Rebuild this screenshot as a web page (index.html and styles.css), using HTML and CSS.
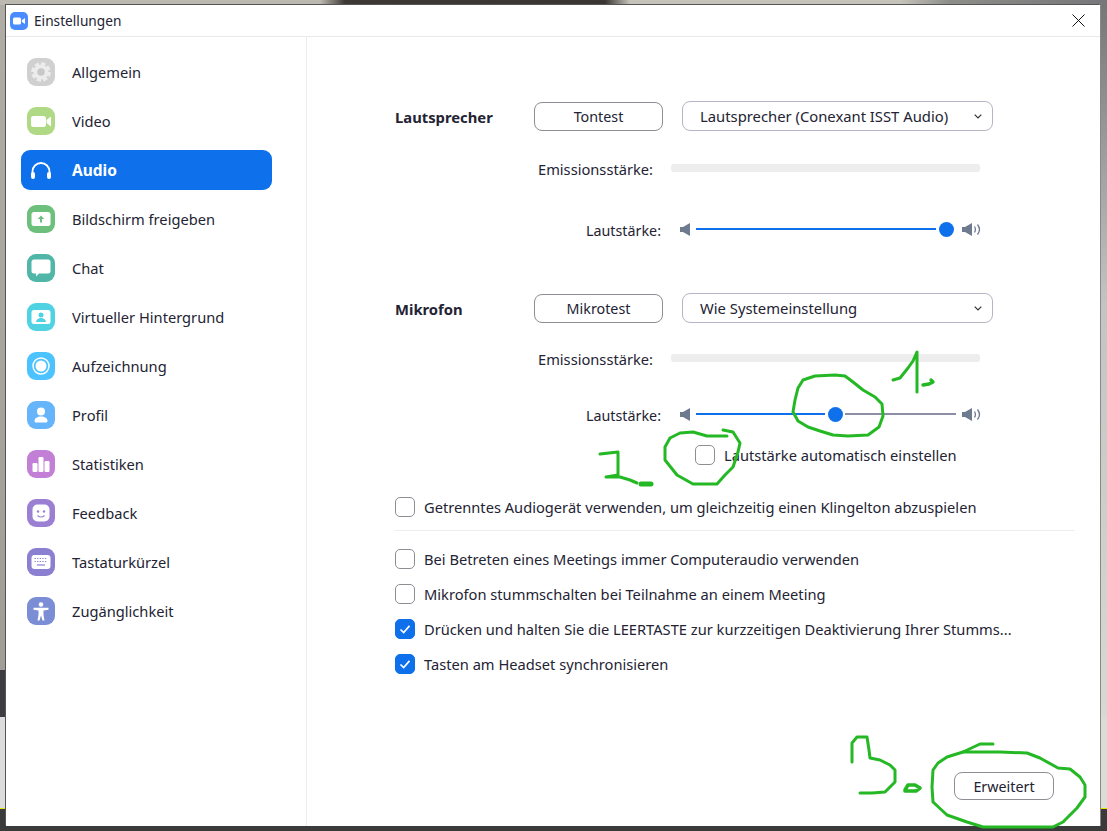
FILE: index.html
```html
<!DOCTYPE html>
<html lang="de">
<head>
<meta charset="utf-8">
<title>Einstellungen</title>
<link rel="stylesheet" href="styles.css">
</head>
<body>
<div class="window">
  <header class="titlebar">
    <svg class="app-logo" viewBox="0 0 18 18"><rect width="18" height="18" rx="5" fill="#4a8cff"/><rect x="3" y="5.500" width="8" height="7" rx="1.500" fill="#fff"/><path d="M11.800 8.200 15 6v6l-3.200-2.200z" fill="#fff"/></svg>
    <span class="title">Einstellungen</span>
    <svg class="close" viewBox="0 0 13 13"><path d="M.5.5l12 12M12.500.5l-12 12" stroke="#111" stroke-width="1" fill="none"/></svg>
  </header>
  <div class="main">
    <nav class="sidebar">
      <a class="nav-item"><span class="icon c-general"><svg viewBox="0 0 28 28"><circle cx="14" cy="14" r="7.500" fill="#ececec"/><circle cx="14" cy="14" r="8.300" fill="none" stroke="#ececec" stroke-width="3" stroke-dasharray="4.300 2.200"/><circle cx="14" cy="14" r="3.800" fill="#c8c8c8"/></svg></span><span>Allgemein</span></a>
      <a class="nav-item"><span class="icon c-video"><svg viewBox="0 0 28 28"><rect x="4" y="9" width="15" height="11" rx="2.500" fill="#fff"/><path d="M19.500 13 24 9.500v10L19.500 16z" fill="#fff"/></svg></span><span>Video</span></a>
      <a class="nav-item active"><span class="icon"><svg viewBox="0 0 28 28"><path d="M5.500 20v-4.500a8.500 8.500 0 0 1 17 0V20" fill="none" stroke="#fff" stroke-width="1.800"/><rect x="4" y="16" width="4" height="7" rx="2" fill="#fff"/><rect x="20" y="16" width="4" height="7" rx="2" fill="#fff"/></svg></span><span>Audio</span></a>
      <a class="nav-item"><span class="icon c-share"><svg viewBox="0 0 28 28"><rect x="4.500" y="7" width="19" height="14" rx="2.500" fill="#fff"/><path d="M14 10.500l3.200 3.500H15v3.500h-2V14h-2.200z" fill="#6cc07c"/></svg></span><span>Bildschirm freigeben</span></a>
      <a class="nav-item"><span class="icon c-chat"><svg viewBox="0 0 28 28"><path d="M7 5.500h14a2.500 2.500 0 0 1 2.500 2.500v9a2.500 2.500 0 0 1-2.500 2.500H12L9 22.500v-3H7A2.500 2.500 0 0 1 4.500 17V8A2.500 2.500 0 0 1 7 5.500z" fill="#fff"/></svg></span><span>Chat</span></a>
      <a class="nav-item"><span class="icon c-virtual"><svg viewBox="0 0 28 28"><rect x="4.500" y="7" width="19" height="14" rx="2.500" fill="#fff"/><circle cx="14" cy="12" r="2.500" fill="#4fd3e3"/><path d="M9 19c.5-3 2.500-4 5-4s4.500 1 5 4z" fill="#4fd3e3"/></svg></span><span>Virtueller Hintergrund</span></a>
      <a class="nav-item"><span class="icon c-record"><svg viewBox="0 0 28 28"><circle cx="14" cy="14" r="8" fill="none" stroke="#fff" stroke-width="1.500"/><circle cx="14" cy="14" r="5.500" fill="#fff"/></svg></span><span>Aufzeichnung</span></a>
      <a class="nav-item"><span class="icon c-profile"><svg viewBox="0 0 28 28"><circle cx="14" cy="10.500" r="4" fill="#fff"/><path d="M7.500 20c0-3 3-4.500 6.500-4.500s6.500 1.500 6.500 4.500c0 1-1 1.500-2 1.500H9.500c-1 0-2-.5-2-1.500z" fill="#fff"/></svg></span><span>Profil</span></a>
      <a class="nav-item"><span class="icon c-stats"><svg viewBox="0 0 28 28"><rect x="5.500" y="13" width="5" height="9" rx="1.200" fill="#fff"/><rect x="11.500" y="7" width="5" height="15" rx="1.200" fill="#fff"/><rect x="17.500" y="11" width="5" height="11" rx="1.200" fill="#fff"/></svg></span><span>Statistiken</span></a>
      <a class="nav-item"><span class="icon c-feedback"><svg viewBox="0 0 28 28"><rect x="5.500" y="5.500" width="17" height="17" rx="5" fill="#fff"/><circle cx="11" cy="12.500" r="1.200" fill="#9a7fd3"/><circle cx="17" cy="12.500" r="1.200" fill="#9a7fd3"/><path d="M10.500 16.500c2 2 5 2 7 0" fill="none" stroke="#9a7fd3" stroke-width="1.200"/></svg></span><span>Feedback</span></a>
      <a class="nav-item"><span class="icon c-keys"><svg viewBox="0 0 28 28"><rect x="4.500" y="7" width="19" height="14" rx="3" fill="#fff"/><path d="M7.500 10.500h13M7.500 13.500h13" stroke="#8a7fd0" stroke-width="1.200" stroke-dasharray="1.300 1.300"/><path d="M10 17h8" stroke="#8a7fd0" stroke-width="1.200"/></svg></span><span>Tastaturkürzel</span></a>
      <a class="nav-item"><span class="icon c-access"><svg viewBox="0 0 28 28"><circle cx="14" cy="7.500" r="2.300" fill="#fff"/><path d="M6.500 10.800h15v1.900l-5 .8V18l1 5.500h-2L14.200 19h-.4l-1.300 4.500h-2l1-5.500v-4.500l-5-.8z" fill="#fff"/></svg></span><span>Zugänglichkeit</span></a>
    </nav>
    <section class="content">
      <div class="row">
        <strong class="lead">Lautsprecher</strong>
        <button class="btn btn-test">Tontest</button>
        <div class="select"><span>Lautsprecher (Conexant ISST Audio)</span><svg class="chev" viewBox="0 0 8 5"><path d="M.7.7 4 4 7.300.7" fill="none" stroke="#333" stroke-width="1.200"/></svg></div>
      </div>
      <div class="row meter-row mt-28"><span class="meter-label">Emissionsstärke:</span><div class="meter"></div></div>
      <div class="row vol-row mt-40">
        <span class="vol-label">Lautstärke:</span>
        <svg class="spk-low" viewBox="0 0 10 13"><path d="M0 4h3l7-4v13L3 9H0z" fill="#6e7a8e"/></svg>
        <div class="slider"><i class="fill" style="width:240px"></i><i class="thumb"></i><i class="rest"></i></div>
        <svg class="spk-high" viewBox="0 0 19 13"><path d="M0 4h3l7-4v13L3 9H0z" fill="#6e7a8e"/><path d="M12.500 3.500c1.200 2 1.200 4 0 6M15.500 1.500c2.400 3 2.400 7 0 10" fill="none" stroke="#6e7a8e" stroke-width="1.300"/></svg>
      </div>
      <div class="row mt-54">
        <strong class="lead">Mikrofon</strong>
        <button class="btn btn-test">Mikrotest</button>
        <div class="select"><span>Wie Systemeinstellung</span><svg class="chev" viewBox="0 0 8 5"><path d="M.7.7 4 4 7.300.7" fill="none" stroke="#333" stroke-width="1.200"/></svg></div>
      </div>
      <div class="row meter-row mt-26"><span class="meter-label">Emissionsstärke:</span><div class="meter"></div></div>
      <div class="row vol-row mt-35">
        <span class="vol-label">Lautstärke:</span>
        <svg class="spk-low" viewBox="0 0 10 13"><path d="M0 4h3l7-4v13L3 9H0z" fill="#6e7a8e"/></svg>
        <div class="slider"><i class="fill" style="width:129px"></i><i class="thumb"></i><i class="rest"></i></div>
        <svg class="spk-high" viewBox="0 0 19 13"><path d="M0 4h3l7-4v13L3 9H0z" fill="#6e7a8e"/><path d="M12.500 3.500c1.200 2 1.200 4 0 6M15.500 1.500c2.400 3 2.400 7 0 10" fill="none" stroke="#6e7a8e" stroke-width="1.300"/></svg>
      </div>
      <label class="check indent mt-21"><span class="box"></span><span>Lautstärke automatisch einstellen</span></label>
      <label class="check mt-32"><span class="box"></span><span>Getrenntes Audiogerät verwenden, um gleichzeitig einen Klingelton abzuspielen</span></label>
      <hr class="divider">
      <div class="checks">
        <label class="check"><span class="box"></span><span>Bei Betreten eines Meetings immer Computeraudio verwenden</span></label>
        <label class="check"><span class="box"></span><span>Mikrofon stummschalten bei Teilnahme an einem Meeting</span></label>
        <label class="check"><span class="box on"><svg viewBox="0 0 20 20"><path d="M5 10.500l3.500 3.500L15 6.500" fill="none" stroke="#fff" stroke-width="1.800"/></svg></span><span>Drücken und halten Sie die LEERTASTE zur kurzzeitigen Deaktivierung Ihrer Stumms...</span></label>
        <label class="check"><span class="box on"><svg viewBox="0 0 20 20"><path d="M5 10.500l3.500 3.500L15 6.500" fill="none" stroke="#fff" stroke-width="1.800"/></svg></span><span>Tasten am Headset synchronisieren</span></label>
      </div>
      <div class="footer"><button class="btn btn-adv">Erweitert</button></div>
    </section>
  </div>
</div>
<svg class="scribble" viewBox="0 0 1107 831">
  <g fill="none" stroke="#25b825" stroke-width="3" stroke-linejoin="round" stroke-linecap="round">
    <path d="M893 380 900 378 908 368 913 361 917 352V392"/>
    <path d="M923 385 929 384 933 382 931 380" stroke-width="3.400"/>
    <path d="M793 412 795 400 798 388 803 380 815 376 835 375 845 376 853 382 863 390 875 397 882 404 883 416 879 427 868 435 848 436 833 435 820 431 808 427 798 421Z"/>
    <path d="M727 436H707L693 432 680 433 670 438 665 447 665 460 677 475 693 484H717L725 475 733 467 738 452 740 443 733 432 723 430"/>
    <path d="M600 454 618 452V475L606 477H620L630 480 637 483"/>
    <path d="M641 484H651" stroke-width="5"/>
    <path d="M852 762V743L857 737H867L869 750 870 758 880 760 890 765 895 770V782L885 792 872 793H860"/>
    <path d="M905 790 908 785H915L920 788 916 791H905" stroke-width="3.600"/>
    <path d="M993 744H980L963 752"/>
    <path d="M963 752 947 757 938 763 933 770 932 787 933 802 947 815 967 822 983 827H1053L1063 822 1077 808 1085 797V785L1080 777 1070 769 1058 768 1040 758 1027 753 1000 752Z"/>
  </g>
</svg>
</body>
</html>
```

FILE: styles.css
```css
* { box-sizing: border-box; }
html, body { margin: 0; height: 831px; overflow: hidden; }
body {
  position: relative;
  padding: 5px 7px 5px 6px;
  font-family: "Noto Sans", "Open Sans", sans-serif;
  font-size: 14.67px;
  color: #232333;
  background:
    linear-gradient(#3a3a3a, #3a3a3a) 0 809px / 100% 22px no-repeat,
    linear-gradient(#e6e600, #e6e600) 0 808px / 100% 1px no-repeat,
    linear-gradient(#dcdcd6, #dcdcd6) 1100px 717px / 7px 92px no-repeat,
    linear-gradient(#dcdcdc, #dcdcdc) 0 717px / 6px 92px no-repeat,
    linear-gradient(#3e3c40, #3e3c40) 0 670px / 6px 47px no-repeat,
    linear-gradient(#77777a, #c4c4c2 300px, #d8d8d4 717px) 1100px 5px / 7px 712px no-repeat,
    linear-gradient(#b0aca6, #a09c98 670px) 0 5px / 6px 665px no-repeat,
    linear-gradient(90deg, #bcb9b0 0, #bcb9b0 320px, #3e3835 345px, #3a3533 605px, #c6c4ba 630px, #c6c4ba 900px, #8c8c88 950px, #77777a 1107px);
}
.window {
  height: 821px;
  display: flex;
  flex-direction: column;
  background: #fff;
  box-shadow: -1px -1px 0 #555, 1px 0 0 #888;
}
.titlebar {
  height: 32px;
  flex: none;
  display: flex;
  align-items: center;
  padding: 0 15px 0 4px;
  border-bottom: 1px solid #e8eaea;
}
.app-logo { width: 18px; height: 18px; margin-right: 6px; }
.title { flex: 1; font-size: 13.7px; }
.close { width: 13px; height: 13px; }
.main { flex: 1; display: flex; min-height: 0; }
.sidebar {
  width: 301px;
  flex: none;
  padding: 15px 0 0 15px;
  border-right: 1px solid #ececec;
  display: flex;
  flex-direction: column;
  gap: 9px;
}
.nav-item {
  width: 251px;
  height: 40px;
  display: flex;
  align-items: center;
  gap: 17px;
  padding-left: 6px;
  border-radius: 9px;
}
.nav-item.active { background: #0e71eb; color: #fff; font-weight: 700; font-size: 15.5px; }
.icon { width: 28px; height: 28px; flex: none; border-radius: 9px; display: block; }
.icon svg { display: block; width: 28px; height: 28px; }
.c-general { background: #d0d0d0; }
.c-video { background: #b0d986; }
.c-share { background: #6cc07c; }
.c-chat { background: #4fb6a8; }
.c-virtual { background: #4fd3e3; }
.c-record { background: #4cc2ff; }
.c-profile { background: #66b5fb; }
.c-stats { background: #c17fd6; }
.c-feedback { background: #9a7fd3; }
.c-keys { background: #8a7fd0; }
.c-access { background: #7b8dd4; }
.content {
  flex: 1;
  display: flex;
  flex-direction: column;
  padding: 64px 25px 26px 88px;
}
.row { display: flex; align-items: center; }
.mt-21 { margin-top: 21px; }
.mt-26 { margin-top: 26px; }
.mt-28 { margin-top: 28px; }
.mt-32 { margin-top: 32px; }
.mt-35 { margin-top: 35px; }
.mt-40 { margin-top: 40px; }
.mt-54 { margin-top: 54px; }
.lead { width: 139px; padding-top: 2px; font-weight: 700; font-size: 14.8px; }
.btn {
  font: inherit;
  font-size: 14.3px;
  color: inherit;
  background: #fff;
  border: 1px solid #8d8d93;
  border-radius: 8px;
  padding: 0;
}
.btn-test { width: 129px; height: 29px; }
.select {
  width: 311px;
  height: 30px;
  margin-left: 19px;
  padding: 0 10px 0 17px;
  border: 1px solid #b5b5c6;
  border-radius: 8px;
  font-size: 14.8px;
  display: flex;
  align-items: center;
  justify-content: space-between;
}
.chev { width: 8px; height: 5px; }
.meter-row, .vol-row { height: 20px; }
.meter-label { width: 258px; text-align: right; }
.meter { width: 309px; height: 8px; margin: 0 0 2px 18px; background: #ededed; border-radius: 3px; }
.vol-label { width: 266px; padding-top: 2px; font-size: 14.3px; text-align: right; }
.spk-low { width: 10px; height: 13px; margin: 0 2px 0 19px; }
.slider { width: 260px; margin-left: 4px; display: flex; align-items: center; }
.fill { display: block; height: 2px; background: #0e71eb; flex: none; }
.thumb { display: block; width: 15px; height: 15px; margin: 0 2.5px; border-radius: 50%; background: #0e71eb; flex: none; }
.rest { display: block; height: 2px; flex: 1; background: #8d8da5; }
.spk-high { width: 19px; height: 13px; margin-left: 6px; }
.check { display: flex; align-items: center; gap: 9px; height: 20px; white-space: nowrap; }
.indent { margin-left: 300px; }
.box { width: 20px; height: 20px; flex: none; border: 1px solid #8d8d93; border-radius: 5px; background: #fff; display: block; }
.box.on { background: #0e71eb; border-color: #0e71eb; }
.box.on svg { display: block; width: 18px; height: 18px; }
.divider { width: 100%; height: 1px; margin: 13px 0 18px; border: 0; background: #ededed; }
.checks { display: flex; flex-direction: column; gap: 15px; }
.footer { margin-top: auto; display: flex; justify-content: flex-end; padding-right: 21px; }
.btn-adv { width: 100px; height: 28px; }
.scribble { position: absolute; left: 0; top: 0; width: 1107px; height: 831px; pointer-events: none; }
```
